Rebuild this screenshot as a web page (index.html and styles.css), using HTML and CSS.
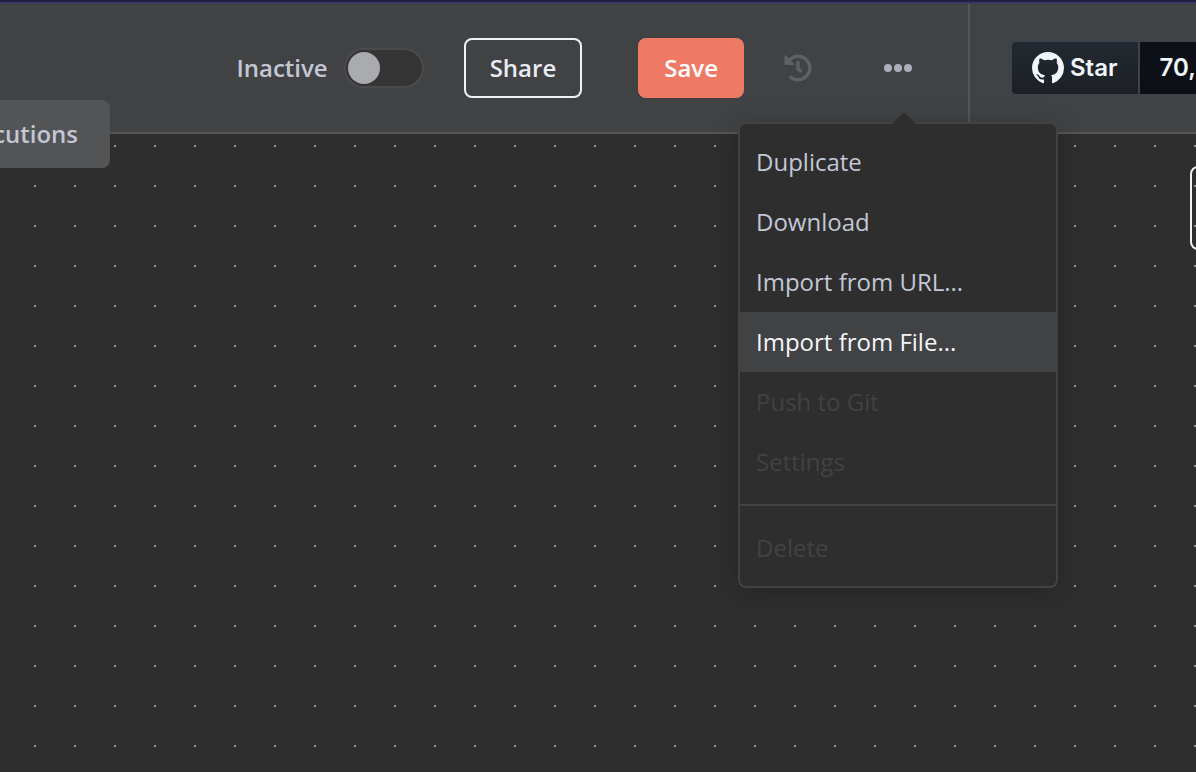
FILE: index.html
```html
<!DOCTYPE html>
<html lang="en">
<head>
<meta charset="utf-8">
<title>Workflow editor</title>
<link rel="stylesheet" href="styles.css">
</head>
<body>
<div class="app">
  <header class="header">
    <div class="actions">
      <label class="activator" for="active">
        <span class="activator-text">Inactive</span>
        <input class="switch" id="active" type="checkbox" role="switch">
      </label>
      <button class="btn btn-outline" type="button">Share</button>
      <button class="btn btn-primary" type="button">Save</button>
      <button class="icon-btn history" type="button" aria-label="History" disabled>
        <svg viewBox="0 0 512 512" width="28" height="28" fill="currentColor" aria-hidden="true"><path d="M504 255.500c.3 136.600-111.200 248.400-247.800 248.500-59 0-113.200-20.500-155.800-54.900-11.100-8.900-11.900-25.500-1.800-35.600l11.300-11.300c8.600-8.600 22.400-9.600 31.900-2C173.100 425.100 212.800 440 256 440c101.700 0 184-82.300 184-184 0-101.700-82.300-184-184-184-48.800 0-93.100 19-126.100 49.900l50.800 50.800c10.100 10.100 2.900 27.300-11.300 27.300H24c-8.800 0-16-7.200-16-16V38.600c0-14.300 17.200-21.400 27.300-11.300l49.400 49.400C129.200 34.100 189.600 8 256 8c136.800 0 247.700 110.800 248 247.500zm-180.900 78.800l9.800-12.600c8.100-10.500 6.300-25.500-4.200-33.700L288 256.300V152c0-13.300-10.700-24-24-24h-16c-13.300 0-24 10.700-24 24v135.700l65.400 50.900c10.500 8.100 25.500 6.300 33.700-4.300z"/></svg>
      </button>
      <div class="more">
        <button class="icon-btn" type="button" aria-label="More actions" aria-haspopup="menu" aria-expanded="true">
          <svg viewBox="0 0 28 28" width="28" height="28" fill="currentColor" aria-hidden="true"><circle cx="4" cy="14" r="4"/><circle cx="14" cy="14" r="4"/><circle cx="24" cy="14" r="4"/></svg>
        </button>
        <div class="menu" role="menu">
          <button class="menu-item" type="button" role="menuitem">Duplicate</button>
          <button class="menu-item" type="button" role="menuitem">Download</button>
          <button class="menu-item" type="button" role="menuitem">Import from URL...</button>
          <button class="menu-item menu-item-active" type="button" role="menuitem">Import from File...</button>
          <button class="menu-item" type="button" role="menuitem" disabled>Push to Git</button>
          <button class="menu-item" type="button" role="menuitem" disabled>Settings</button>
          <hr class="menu-divider">
          <button class="menu-item" type="button" role="menuitem" disabled>Delete</button>
        </div>
      </div>
    </div>
    <div class="github">
      <a class="gh-star" href="#star">
        <svg viewBox="0 0 16 16" width="32" height="32" fill="currentColor" aria-hidden="true"><path d="M8 0c4.420 0 8 3.580 8 8a8.013 8.013 0 0 1-5.450 7.590c-.4.080-.55-.17-.55-.38 0-.27.010-1.130.010-2.200 0-.75-.25-1.230-.54-1.480 1.780-.2 3.650-.88 3.650-3.950 0-.88-.31-1.590-.82-2.150.080-.2.360-1.020-.080-2.120 0 0-.67-.22-2.200.82-.64-.18-1.320-.27-2-.27-.68 0-1.360.090-2 .27-1.530-1.030-2.200-.82-2.200-.82-.44 1.100-.16 1.920-.080 2.120-.51.560-.82 1.280-.82 2.150 0 3.060 1.860 3.750 3.640 3.950-.23.200-.44.550-.51 1.070-.46.210-1.610.55-2.330-.66-.15-.24-.6-.83-1.230-.82-.67.010-.27.380.010.530.34.190.73.900.82 1.130.16.450.68 1.310 2.690.940 0 .67.010 1.300.010 1.490 0 .21-.15.450-.55.380A7.995 7.995 0 0 1 0 8c0-4.420 3.580-8 8-8Z"/></svg>
        <span>Star</span>
      </a>
      <a class="gh-count" href="#stargazers">70,</a>
    </div>
  </header>
  <main class="canvas">
    <button class="canvas-btn" type="button" aria-label="Add node"></button>
  </main>
  <nav class="tabs"><a class="tab" href="#executions">Executions</a></nav>
</div>
</body>
</html>
```
FILE: styles.css
```css
* {
  box-sizing: border-box;
}

body {
  margin: 0;
  background: #2e2e2e;
  color: #c3c7d5;
  font: 400 24px/32px "Open Sans", "Noto Sans", sans-serif;
}

button {
  font: inherit;
  cursor: pointer;
}

.app {
  position: relative;
  display: flex;
  flex-direction: column;
  min-height: 100vh;
  overflow: hidden;
  border-top: 2px solid #1f1f40;
}

.header {
  display: flex;
  align-items: stretch;
  height: 132px;
  background: #414244;
  border-top: 2px solid #3c3a63;
  border-bottom: 2px solid #555658;
}

.actions {
  flex: 1;
  display: flex;
  align-items: center;
  justify-content: flex-end;
  padding-right: 56px;
  border-right: 2px solid #555658;
}

.activator {
  display: flex;
  align-items: center;
  gap: 16px;
  margin-right: 40px;
  font-weight: 600;
}

.switch {
  appearance: none;
  display: flex;
  align-items: center;
  width: 80px;
  height: 40px;
  margin: 0;
  padding: 0 2px;
  background: #353535;
  border: 2px solid #4a4b4c;
  border-radius: 20px;
}

.switch::before {
  content: "";
  width: 32px;
  height: 32px;
  border-radius: 50%;
  background: #aaabaf;
}

.btn {
  height: 60px;
  padding: 0 24px;
  border: 2px solid transparent;
  border-radius: 8px;
  font-weight: 600;
}

.btn-outline {
  margin-right: 56px;
  background: transparent;
  border-color: #f0f1f7;
  color: #eaecf4;
}

.btn-primary {
  margin-right: 40px;
  background: #ee7a66;
  color: #fff;
}

.icon-btn {
  display: flex;
  padding: 0;
  background: none;
  border: 0;
  color: #abafbd;
}

.history {
  margin-right: 72px;
  color: #5f6062;
}

.more {
  position: relative;
}

.menu {
  position: absolute;
  z-index: 3;
  top: 68px;
  right: -146px;
  width: 320px;
  padding: 8px 0;
  background: #2e2e2e;
  border: 2px solid #414244;
  border-radius: 8px;
  box-shadow: 0 4px 24px rgba(0, 0, 0, 0.2);
}

.menu::before {
  content: "";
  position: absolute;
  top: -12px;
  right: 140px;
  border: 12px solid transparent;
  border-top: 0;
  border-bottom-color: #2e2e2e;
}

.menu-item {
  display: block;
  width: 100%;
  height: 60px;
  padding: 0 16px;
  background: none;
  border: 0;
  color: #c3c7d5;
  text-align: left;
}

.menu-item-active {
  background: #414244;
  color: #f4f5fa;
}

.menu-item:disabled {
  color: #414244;
}

.menu-divider {
  height: 2px;
  margin: 12px 0;
  background: #414244;
  border: 0;
}

.github {
  display: flex;
  align-items: center;
  width: 226px;
  padding-left: 40px;
  overflow: hidden;
  font: 600 24px/32px Inter, "Liberation Sans", sans-serif;
}

.gh-star,
.gh-count {
  display: flex;
  align-items: center;
  flex: none;
  height: 56px;
  border: 2px solid #3d434b;
  color: #f0f6fc;
  text-decoration: none;
}

.gh-star {
  gap: 6px;
  padding: 0 20px;
  background: linear-gradient(#242830, #1c2026);
  border-radius: 6px 0 0 6px;
}

.gh-count {
  padding: 0 20px;
  background: #0d1117;
  border-left: 0;
}

.canvas {
  position: relative;
  flex: 1;
  background: conic-gradient(from 90deg at 38px 38px, #969696 25%, transparent 0) -4px -27px / 40px 40px;
}

.canvas-btn {
  position: absolute;
  top: 32px;
  right: -78px;
  width: 84px;
  height: 84px;
  background: transparent;
  border: 2px solid #f0f1f7;
  border-radius: 8px;
}

.tabs {
  position: absolute;
  top: 98px;
  left: 0;
  display: flex;
  justify-content: flex-end;
  width: 110px;
  padding: 18px 32px;
  background: #535456;
  border-radius: 0 8px 8px 0;
}

.tab {
  color: #c3c7d5;
  font-weight: 600;
  text-decoration: none;
}
```
